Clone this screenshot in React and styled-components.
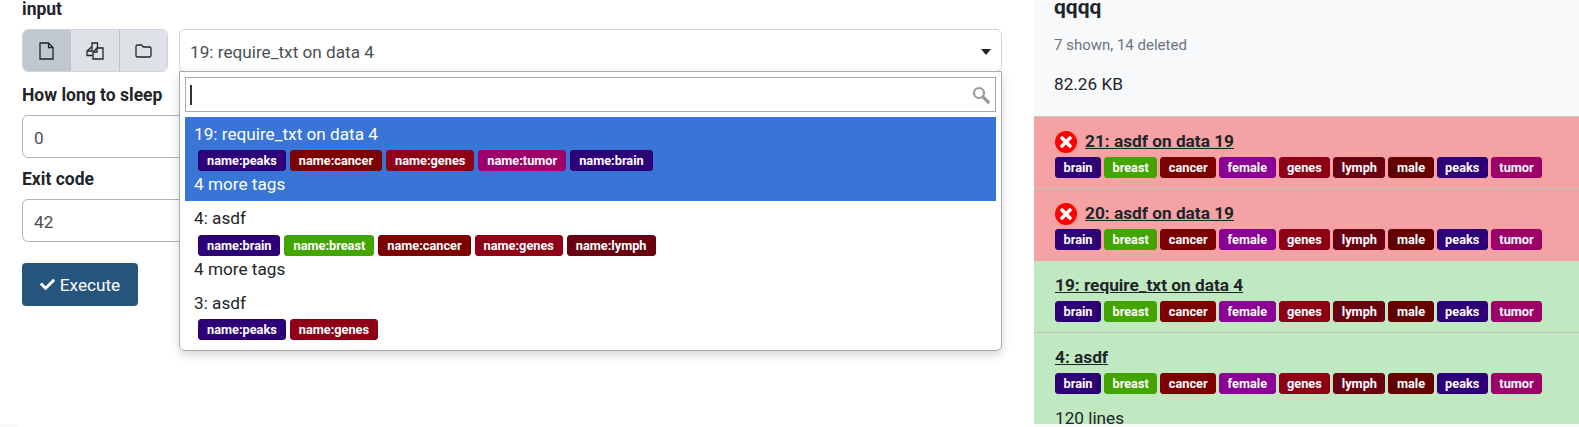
import React from "react";
import styled, { createGlobalStyle } from "styled-components";
import { FaCheck } from "react-icons/fa";

const Global = createGlobalStyle`
  html, body { margin: 0; padding: 0; background: #fff; }
  body { font-family: Roboto, "Liberation Sans", sans-serif; font-size: 17.2px; line-height: 24px; color: #212529; }
`;

const Page = styled.div`
  width: 1579px; height: 427px; overflow: hidden; display: flex; flex-direction: column;
`;
const Columns = styled.div`
  display: flex; height: 424px; flex: none;
`;
const Strip = styled.div`
  height: 3px; display: flex;
`;
const StripLeft = styled.div`
  width: 17px; background: #f8f9fa;
`;
const StripRight = styled.div`
  margin-left: 1017px; flex: 1; background: #f8f9fa;
`;
const Left = styled.div`
  width: 1034px; flex: none; box-sizing: border-box; padding: 0 32px 0 22px;
`;
const Field = styled.div`
  margin-bottom: ${p => p.$after}px;
`;
const Label = styled.div`
  font-weight: 700; font-size: 17.5px; line-height: 18px; margin-bottom: 11px; color: #212529; padding-top: 1px; margin-top: -1px;
`;
const InputRow = styled.div`
  display: flex; gap: 11px;
`;
const ButtonGroup = styled.div`
  display: flex; flex: none; width: 146px; height: 43px; border-radius: 6px; overflow: hidden; border: 1px solid #ced4da; box-sizing: border-box;
`;
const ModeButton = styled.div`
  flex: 1; display: flex; align-items: center; justify-content: center;
  background: ${p => (p.$active ? "#bfc8d0" : "#dee2e6")};
  & + & { border-left: 1px solid #bfc3c7; }
`;
const SelectField = styled.div`
  flex: 1; position: relative; height: 43px; box-sizing: border-box; border: 1px solid #ced4da; border-radius: 6px;
  background: #fff; padding: 2px 10px 0; display: flex; align-items: center; justify-content: space-between; color: #495057;
`;
const Caret = styled.div`
  width: 0; height: 0; border-left: 5px solid transparent; border-right: 5px solid transparent; border-top: 6px solid #212529; margin-top: 1px;
`;
const Dropdown = styled.div`
  position: absolute; left: -1px; right: -1px; top: 41px; height: 280px; box-sizing: border-box; background: #fff;
  border: 1px solid #aaa; border-radius: 0 0 6px 6px; padding: 5px 5px 0;
  box-shadow: 0 4px 10px rgba(0,0,0,.16); z-index: 5; color: #212529;
`;
const SearchBox = styled.div`
  height: 35px; box-sizing: border-box; border: 1px solid #aaa; display: flex; align-items: center; justify-content: space-between; padding: 0 5px 0 4px; margin-bottom: 5px;
`;
const Cursor = styled.div`
  width: 2px; height: 20px; background: #333;
`;
const Option = styled.div`
  padding: 5px 9px 0; height: ${p => (p.$roomy ? 85 : 84)}px; box-sizing: border-box;
  background: ${p => (p.$selected ? "#3875d7" : "transparent")};
  color: ${p => (p.$selected ? "#fff" : "#212529")};
`;
const OptionTags = styled.div`
  display: flex; gap: 4px; margin: ${p => (p.$roomy ? 5 : 4)}px 0 1px 4px;
`;
const Tag = styled.span`
  display: inline-block; box-sizing: border-box; height: 21px; font-weight: 700; font-size: 12.75px; color: #fff; border-radius: 3px;
  padding: 0 ${p => (p.$wide ? 8 : 7.5)}px; background: ${p => p.$color};
  border: 1px solid ${p => p.$color}; line-height: 19px; white-space: nowrap;
`;
const TextInput = styled.div`
  height: 43px; box-sizing: border-box; border: 1px solid #adb5bd; border-radius: 6px; padding: 2px 11px 0; display: flex; align-items: center; color: #495057;
`;
const ExecuteButton = styled.div`
  width: 116px; height: 43px; background: #25557c; color: #fff; border-radius: 4px; display: flex; align-items: center; justify-content: center; gap: 5px;
`;
const Right = styled.div`
  flex: 1; background: #f8f9fa; overflow: hidden;
`;
const Head = styled.div`
  display: flow-root; height: 117px; box-sizing: border-box; padding: 0 20px; border-bottom: 1px solid #c9c9c9;
`;
const HeadTitle = styled.div`
  font-size: 21px; font-weight: 700; line-height: 18px; margin: -2px 0 19px; color: #212529;
`;
const HeadSub = styled.div`
  font-size: 15px; color: #6c757d; line-height: 20px; margin-bottom: 18px;
`;
const HeadSize = styled.div`
  line-height: 22px; color: #212529;
`;
const Item = styled.div`
  background: ${p => (p.$state === "error" ? "#f4a2a3" : "#c1e9c1")};
  height: 72px; box-sizing: border-box; padding: 12px 21px 0; border-bottom: ${p => (p.$sep ? "1px solid #c4c4c4" : "none")};
`;
const LastItem = styled(Item)`
  height: 91px;
`;
const ItemTitle = styled.div`
  display: flex; align-items: center; gap: 8px; height: 24px; margin-bottom: 4px; font-weight: 700; font-size: 17.25px; color: #212529;
  text-decoration: underline;
`;
const TagRow = styled.div`
  display: flex; gap: 3px;
`;
const Lines = styled.div`
  margin-top: 12px; color: #212529;
`;

const C = { brain: "#2e0078", breast: "#43a500", cancer: "#7c0000", female: "#8b0095", genes: "#8f0016", lymph: "#690012", male: "#640000", peaks: "#2e0078", tumor: "#9c0068" };
const ALL = Object.keys(C);

const Tags = () => <TagRow>{ALL.map(t => <Tag key={t} $color={C[t]}>{t}</Tag>)}</TagRow>;
const OptTags = ({ names, roomy }) => <OptionTags $roomy={roomy}>{names.map(t => <Tag key={t} $wide $color={C[t]}>name:{t}</Tag>)}</OptionTags>;

const FileIcon = () => (
  <svg width="15" height="18" viewBox="0 0 15 18" fill="none" stroke="#212529" strokeWidth="1.3">
    <path d="M1 1 L9.5 1 L14 5.5 L14 17 L1 17 Z" />
    <path d="M9.5 1 L9.5 5.5 L14 5.5" />
  </svg>
);
const CopyIcon = () => (
  <svg width="18" height="18" viewBox="0 0 18 18" fill="none" stroke="#212529" strokeWidth="1.3">
    <path d="M6 4.5 L6 1 L11.5 1 L11.5 6" />
    <path d="M6 4.5 L1 9 L1 13.5 L6.5 13.5" />
    <path d="M1 9 L6 9 L6 4.5" />
    <path d="M11 6 L17 6 L17 17 L7 17 L7 10 Z" />
    <path d="M11 6 L11 10 L7 10" />
  </svg>
);
const FolderIcon = () => (
  <svg width="17" height="14" viewBox="0 0 17 14" fill="none" stroke="#212529" strokeWidth="1.3">
    <path d="M1 2.5 Q1 1 2.5 1 L6.5 1 L8.5 3 L14.5 3 Q16 3 16 4.5 L16 11.5 Q16 13 14.5 13 L2.5 13 Q1 13 1 11.5 Z" />
  </svg>
);
const SearchIcon = () => (
  <svg width="18" height="18" viewBox="0 0 18 18" fill="none" stroke="#999" >
    <circle cx="7" cy="7" r="5" strokeWidth="2.2" />
    <path d="M11.2 11.2 L16.2 16.2" strokeWidth="3.2" strokeLinecap="round" />
  </svg>
);
const ErrorIcon = () => (
  <svg width="22" height="24" viewBox="0 0 22 24" style={{ flex: "none" }}>
    <circle cx="11" cy="13" r="11" fill="#ff0000" />
    <path d="M7 9 L15 17 M15 9 L7 17" stroke="#fff" strokeWidth="3.6" strokeLinecap="round" />
  </svg>
);

export default function App() {
  return (
    <Page>
      <Global />
      <Columns>
        <Left>
          <Field $after={14}>
            <Label>input</Label>
            <InputRow>
              <ButtonGroup>
                <ModeButton $active><FileIcon /></ModeButton>
                <ModeButton><CopyIcon /></ModeButton>
                <ModeButton><FolderIcon /></ModeButton>
              </ButtonGroup>
              <SelectField>
                19: require_txt on data 4
                <Caret />
                <Dropdown>
                  <SearchBox><Cursor /><SearchIcon /></SearchBox>
                  <Option $selected>
                    19: require_txt on data 4
                    <OptTags names={["peaks", "cancer", "genes", "tumor", "brain"]} />
                    4 more tags
                  </Option>
                  <Option $roomy>
                    4: asdf
                    <OptTags roomy names={["brain", "breast", "cancer", "genes", "lymph"]} />
                    4 more tags
                  </Option>
                  <Option>
                    3: asdf
                    <OptTags names={["peaks", "genes"]} />
                  </Option>
                </Dropdown>
              </SelectField>
            </InputRow>
          </Field>
          <Field $after={12}>
            <Label>How long to sleep</Label>
            <TextInput>0</TextInput>
          </Field>
          <Field $after={21}>
            <Label>Exit code</Label>
            <TextInput>42</TextInput>
          </Field>
          <ExecuteButton><FaCheck size={15} /> Execute</ExecuteButton>
        </Left>
        <Right>
          <Head>
            <HeadTitle>qqqq</HeadTitle>
            <HeadSub>7 shown, 14 deleted</HeadSub>
            <HeadSize>82.26 KB</HeadSize>
          </Head>
          <Item $state="error" $sep>
            <ItemTitle><ErrorIcon /><span>21: asdf on data 19</span></ItemTitle>
            <Tags />
          </Item>
          <Item $state="error">
            <ItemTitle><ErrorIcon /><span>20: asdf on data 19</span></ItemTitle>
            <Tags />
          </Item>
          <Item $state="ok" $sep>
            <ItemTitle><span>19: require_txt on data 4</span></ItemTitle>
            <Tags />
          </Item>
          <LastItem $state="ok">
            <ItemTitle><span>4: asdf</span></ItemTitle>
            <Tags />
            <Lines>120 lines</Lines>
          </LastItem>
        </Right>
      </Columns>
      <Strip><StripLeft /><StripRight /></Strip>
    </Page>
  );
}
